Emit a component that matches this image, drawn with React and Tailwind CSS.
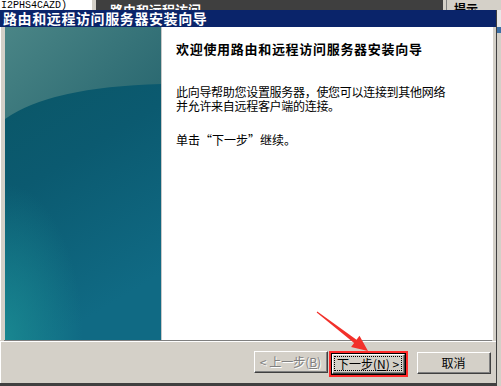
import React from "react";

const cjk = { fontFamily: '"Noto Sans CJK SC", "Noto Sans", sans-serif' };

const SideArt = () => (
  <svg width="156" height="313" viewBox="0 0 156 313" className="block">
    <defs>
      <linearGradient id="base" x1="0" y1="0" x2="0.3" y2="1">
        <stop offset="0" stopColor="#0a5563" />
        <stop offset="0.5" stopColor="#0b5a70" />
        <stop offset="1" stopColor="#106a84" />
      </linearGradient>
      <linearGradient id="cap" x1="0" y1="0" x2="1" y2="0.6">
        <stop offset="0" stopColor="#4a8586" />
        <stop offset="1" stopColor="#2c6a72" />
      </linearGradient>
      <radialGradient id="glow" cx="0" cy="1" r="0.5">
        <stop offset="0" stopColor="#1a8a92" stopOpacity="0.9" />
        <stop offset="1" stopColor="#1a8a92" stopOpacity="0" />
      </radialGradient>
    </defs>
    <rect width="156" height="313" fill="url(#base)" />
    <rect width="156" height="313" fill="url(#glow)" />
    <path d="M0,92 Q45,60 156,57 L156,0 L0,0 Z" fill="url(#cap)" />
  </svg>
);

const ClassicButton = ({ children, disabled, primary }) => (
  <div
    className={
      primary
        ? "w-[75px] h-[22px] border border-black bg-[#d4d0c8]"
        : "w-[74px] h-[22px] bg-[#d4d0c8]"
    }
  >
    <div className="w-full h-full border-t border-l border-white border-r border-b border-r-[#404040] border-b-[#404040]">
      <div className="w-full h-full border-r border-b border-r-[#808080] border-b-[#808080] flex items-center justify-center">
        {primary ? (
          <div className="px-[2px] leading-[13px] border border-dotted border-black text-[12px] text-black">
            {children}
          </div>
        ) : (
          <div
            className={
              disabled
                ? "text-[12px] text-[#808080] [text-shadow:1px_1px_0_#ffffff]"
                : "text-[12px] text-black"
            }
          >
            {children}
          </div>
        )}
      </div>
    </div>
  </div>
);

export default function App() {
  return (
    <div
      className="relative w-[501px] h-[386px] overflow-hidden bg-[#d4d0c8]"
      style={cjk}
    >
      {/* window behind the dialog, only its bottom edge shows */}
      <div className="flex h-[10px] overflow-hidden">
        <div className="w-[92px] h-[10px] overflow-hidden bg-white text-[10px] leading-[10px] text-black font-mono pl-[1px] pt-[1px]">
          I2PHS4CAZD)
        </div>
        <div className="w-[4px] bg-[#d4d0c8]" />
        <div className="w-[347px] h-[10px] overflow-hidden bg-[#3f3f3f] text-white text-[13px] leading-[14px] font-bold pl-[14px] pt-[3px]">
          路由和远程访问
        </div>
        <div className="w-[4px] bg-[#d4d0c8] border-r border-[#808080]" />
        <div className="flex-1 h-[10px] overflow-hidden bg-[#d4d0c8] text-[12px] leading-[14px] font-bold pl-[7px] pt-[2px]">
          提示
        </div>
      </div>

      <div className="flex">
        {/* dialog */}
        <div className="w-[497px] h-[376px] flex flex-col border-r border-[#404040]">
          <div className="h-[17px] bg-[#0a246a] text-white text-[14px] font-bold leading-[17px] pl-[3px] tracking-[0.6px]">
            路由和远程访问服务器安装向导
          </div>
          <div className="flex h-[313px] pl-[4px] pr-[3px] border-l border-white">
            <SideArt />
            <div className="w-[1px] bg-[#c8c8c8]" />
            <div className="flex-1 bg-white pl-[14px] pt-[13px] text-black">
              <div className="text-[13px] font-bold leading-[17px] tracking-[0.7px]">
                欢迎使用路由和远程访问服务器安装向导
              </div>
              <div className="mt-[28px] text-[12px] leading-[14px] tracking-[-0.3px]">
                <div>此向导帮助您设置服务器，使您可以连接到其他网络</div>
                <div>并允许来自远程客户端的连接。</div>
              </div>
              <div className="mt-[20px] text-[12px] leading-[14px]">
                单击“下一步”继续。
              </div>
            </div>
          </div>
          <div className="h-[1px] bg-[#808080] mx-[4px]" />
          <div className="h-[1px] bg-white" />
          <div className="flex-1 flex items-start pt-[9px] pl-[253px] border-l border-white">
            <ClassicButton disabled>
              &lt; 上一步(<u>B</u>)
            </ClassicButton>
            <div className="ml-[1px] border-2 border-[#ff2a2a]">
              <ClassicButton primary>
                下一步(<u>N</u>) &gt;
              </ClassicButton>
            </div>
            <div className="ml-[9px] mt-[1px]">
              <ClassicButton>取消</ClassicButton>
            </div>
          </div>
          <div className="h-[3px] bg-[#404040]" />
        </div>
        {/* sliver of the window on the right */}
        <div className="flex-1 bg-[#d4d0c8] flex flex-col">
          <div className="h-[17px] bg-[#e8e8e8]" />
          <div className="h-[6px] bg-[#3a6ea5]" />
        </div>
      </div>

      {/* red annotation arrow */}
      <svg
        className="absolute left-0 top-0 pointer-events-none"
        width="501"
        height="386"
        viewBox="0 0 501 386"
      >
        <polygon
          points="316.7,312.4 317.3,311.6 356.5,339.7 359.5,335.7 368,351 351.1,346.9 354.1,342.9"
          fill="#f2302a"
        />
      </svg>
    </div>
  );
}
